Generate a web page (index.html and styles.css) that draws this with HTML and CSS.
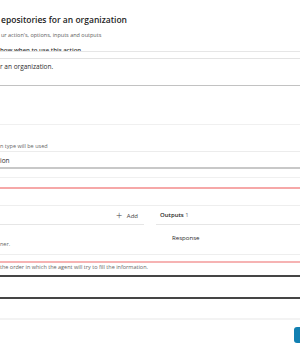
FILE: index.html
```html
<!DOCTYPE html>
<html lang="en">
<head>
  <meta charset="UTF-8" />
  <title>Action details</title>
  <link rel="stylesheet" href="styles.css">
</head>
<body>
  <div class="dialog">
    <header class="head">
      <h1 class="title">epositories for an organization</h1>
      <p class="subtitle">ur action's, options, inputs and outputs</p>
    </header>

    <div class="body">
      <div class="clip-label"><span>how when to use this action</span></div>
      <div class="textarea">r an organization.</div>

      <div class="faint"></div>
      <p class="hint">n type will be used</p>
      <div class="select">ion</div>
      <div class="faint second"></div>

      <div class="io-box">
        <div class="io-card">
          <div class="io-col">
            <div class="io-head right"><span class="plus">+</span> Add</div>
            <p class="hint small">ner.</p>
          </div>
          <div class="io-col">
            <div class="io-head"><b>Outputs</b> <span class="count">1</span></div>
            <p class="io-item">Response</p>
          </div>
        </div>
      </div>
      <p class="hint order">the order in which the agent will try to fill the information.</p>
      <div class="dark-input"></div>
    </div>

    <footer class="foot">
      <button class="primary" aria-label="Save"></button>
    </footer>
  </div>
</body>
</html>
```

FILE: styles.css
```css
body {
  margin: 0;
  font-family: "Open Sans", "Noto Sans", sans-serif;
  background: #fff;
  color: #242424;
  overflow: hidden;
}
p { margin: 0; }
.dialog {
  width: 300px;
  height: 350px;
  overflow: hidden;
}
.head {
  height: 47px;
  padding-left: 1px;
}
.title {
  margin: 0;
  padding-top: 11px;
  font-size: 8.5px;
  line-height: 18px;
  font-weight: 600;
}
.subtitle {
  font-size: 5.5px;
  line-height: 12px;
  color: #5c5c5c;
}
.clip-label {
  height: 4px;
  overflow: hidden;
  border-bottom: 1px solid #e6e6e6;
  font-size: 6px;
  font-weight: 600;
  color: #333;
}
.clip-label span {
  display: block;
  margin-top: -3.5px;
  line-height: 12px;
}
.textarea {
  margin-top: 6px;
  height: 24px;
  padding-top: 2px;
  border-top: 1px solid #e3e3e3;
  border-bottom: 1px solid #c2c2c2;
  font-size: 6.5px;
  line-height: 12px;
  color: #2b2b2b;
}
.faint {
  margin-top: 38px;
  border-top: 1px solid #f0f0f0;
  height: 16px;
}
.faint.second {
  margin-top: 8px;
  height: 9px;
}
.hint {
  font-size: 5.5px;
  line-height: 10px;
  color: #666;
}
.select {
  height: 12px;
  padding-top: 3px;
  border-top: 1px solid #ececec;
  border-bottom: 2px solid #c8c8c8;
  font-size: 6.5px;
  line-height: 12px;
  color: #2b2b2b;
}
.io-box {
  border-top: 2px solid #f6a8a8;
  border-bottom: 2px solid #f6b3b3;
  padding: 16px 0 6px;
}
.io-card {
  display: grid;
  grid-template-columns: 144px 144px;
  gap: 12px;
  height: 48px;
  border-top: 1px solid #eeeeee;
  border-bottom: 1px solid #eeeeee;
}
.io-head {
  height: 18px;
  border-bottom: 1px solid #e6e6e6;
  font-size: 6px;
  line-height: 18px;
  padding-left: 4px;
}
.io-head.right {
  text-align: right;
  padding: 0 6px 0 0;
  color: #424242;
}
.plus {
  font-size: 11px;
  font-weight: 300;
  vertical-align: -1px;
  margin-right: 3px;
}
.io-head b { font-weight: 600; }
.count { color: #707070; }
.hint.small { margin-top: 14px; }
.io-item {
  font-size: 6.1px;
  line-height: 12px;
  padding: 7px 0 0 16px;
  color: #2b2b2b;
}
.hint.order {
  font-size: 5.5px;
  line-height: 8px;
  margin-top: 0;
}
.dark-input {
  margin-top: 4px;
  height: 20px;
  border-top: 2px solid #454545;
  border-bottom: 2px solid #454545;
}
.foot {
  margin-top: 19px;
  border-top: 2px solid #f3f3f3;
  padding: 7px 0 0 294px;
}
.primary {
  display: block;
  width: 40px;
  height: 16px;
  border: none;
  border-radius: 3px;
  background: #1280b2;
}
```
